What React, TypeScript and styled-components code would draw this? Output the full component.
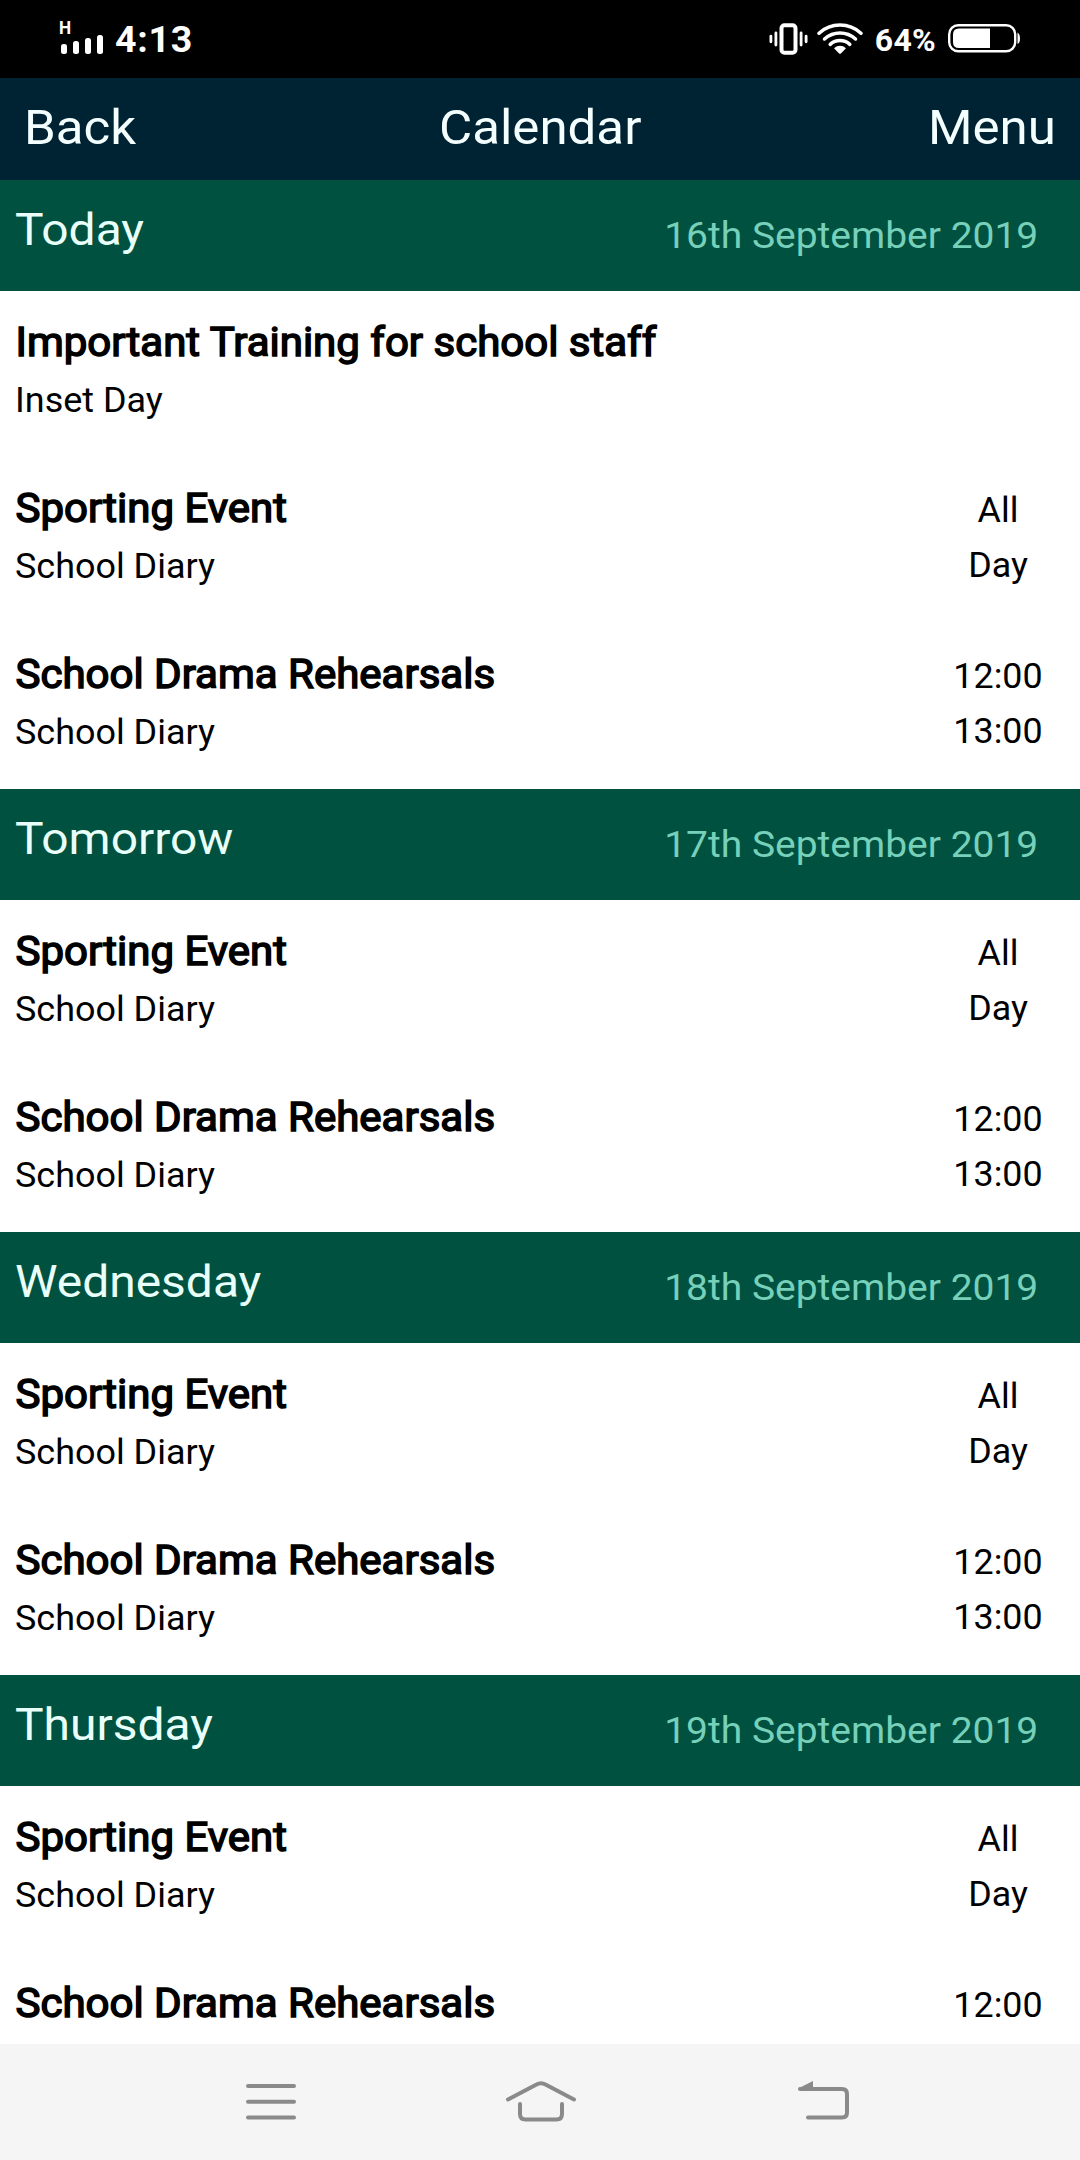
import React from "react";
import styled, { createGlobalStyle } from "styled-components";

const GlobalStyle = createGlobalStyle`
  * { box-sizing: border-box; }
  html, body { margin: 0; padding: 0; background: #fff; }
  body { font-family: Roboto, "Liberation Sans", sans-serif; overflow: hidden; }
`;

const Screen = styled.div`
  width: 1080px;
  height: 2160px;
  display: flex;
  flex-direction: column;
  overflow: hidden;
  background: #fff;
`;

const StatusBar = styled.div`
  flex: none;
  height: 77.5px;
  padding: 0 59px 0 59px;
  display: flex;
  justify-content: space-between;
  align-items: center;
  background: #000;
  color: #fff;
`;

const StatusGroup = styled.div`
  display: flex;
  align-items: center;
  height: 78px;
`;

const Signal = styled.div`
  width: 46px;
  height: 36px;
  display: flex;
  flex-direction: column;
  justify-content: space-between;
  margin-bottom: 4px;
`;

const Network = styled.span`
  font-size: 19px;
  font-weight: 700;
  line-height: 18px;
  height: 16px;
  transform: scaleX(0.9);
  transform-origin: left;
`;

const Clock = styled.span`
  margin-left: 10px;
  font-size: 37.5px;
  font-weight: 700;
  line-height: 44px;
  letter-spacing: 0.7px;
  padding-top: 1px;
`;

const Percent = styled.span`
  margin: 2px 12px 0 12px;
  font-size: 32px;
  font-weight: 700;
  line-height: 40px;
  letter-spacing: 0.3px;
`;

const AppBar = styled.header`
  flex: none;
  height: 102.5px;
  padding: 0 24px;
  display: grid;
  grid-template-columns: 1fr auto 1fr;
  align-items: center;
  background: #002333;
  color: #f4ffff;
  font-size: 48.5px;
  line-height: 98px;
  padding-bottom: 2px;
`;

const NavLink = styled.span<{ $align: "left" | "center" | "right" }>`
  text-align: ${(p) => p.$align};
  transform: scaleX(1.052);
  transform-origin: ${(p) => p.$align};
`;

const Agenda = styled.main`
  flex: 1;
  min-height: 0;
  overflow: hidden;
`;

const DayHeader = styled.div`
  height: 110.9px;
  padding: 22px 42px 0 15px;
  display: flex;
  justify-content: space-between;
  background: #00513f;
`;

const DayName = styled.span`
  font-size: 45px;
  line-height: 55px;
  color: #e8fffa;
  transform: scaleX(1.065);
  transform-origin: left;
`;

const DayDate = styled.span`
  font-size: 36.5px;
  line-height: 67px;
  color: #77d0b9;
  transform: scaleX(1.068);
  transform-origin: right;
`;

const Event = styled.div`
  height: 166.1px;
  padding: 24px 26.5px 0 15px;
  display: flex;
  justify-content: space-between;
  color: #000;
`;

const EventTitle = styled.div`
  padding-left: 0.5px;
  font-size: 40px;
  line-height: 56px;
  -webkit-text-stroke: 1.5px #000;
  transform: scaleX(1.05);
  transform-origin: left;
`;

const Source = styled.div`
  margin-top: 2px;
  font-size: 34.3px;
  line-height: 55px;
  transform: scaleX(1.048);
  transform-origin: left;
`;

const Times = styled.div`
  width: 112px;
  padding-top: 2px;
  font-size: 34.3px;
  line-height: 55px;
  text-align: center;
  transform: scaleX(1.045);
`;

const SystemNav = styled.footer`
  flex: none;
  height: 116px;
  padding: 0 226px 0 242px;
  display: flex;
  justify-content: space-between;
  align-items: center;
  background: #f5f5f5;
  color: #8a8a8a;
`;

const HomeButton = styled.div`
  display: flex;
  margin-right: 14px;
`;

type CalendarEvent = { title: string; source?: string; times?: string[] };
type Day = { name: string; date: string; events: CalendarEvent[] };

const sporting: CalendarEvent = { title: "Sporting Event", source: "School Diary", times: ["All", "Day"] };
const drama: CalendarEvent = { title: "School Drama Rehearsals", source: "School Diary", times: ["12:00", "13:00"] };

const days: Day[] = [
  {
    name: "Today",
    date: "16th September 2019",
    events: [{ title: "Important Training for school staff", source: "Inset Day" }, sporting, drama],
  },
  { name: "Tomorrow", date: "17th September 2019", events: [sporting, drama] },
  { name: "Wednesday", date: "18th September 2019", events: [sporting, drama] },
  {
    name: "Thursday",
    date: "19th September 2019",
    events: [sporting, { title: "School Drama Rehearsals", times: ["12:00"] }],
  },
];

const SignalBars = () => (
  <svg width="46" height="20" viewBox="0 0 46 20" fill="#fff">
    <rect x="2" y="9" width="6" height="10" rx="2.5" />
    <rect x="14" y="6" width="6" height="13" rx="2.5" />
    <rect x="26" y="3" width="6" height="16" rx="2.5" />
    <rect x="38" y="0" width="6" height="19" rx="2.5" />
  </svg>
);

const Vibrate = styled.svg`
  margin-right: 8px;
`;

const VibrateIcon = () => (
  <Vibrate width="40" height="32" viewBox="0 0 40 32" fill="none" stroke="#fff" strokeLinecap="round">
    <rect x="12.5" y="2.3" width="14" height="27.4" rx="3" strokeWidth="4" />
    <path d="M6.9 10v12M32.1 10v12" strokeWidth="2.8" />
    <path d="M1.9 13.2v5.6M37.1 13.2v5.6" strokeWidth="2.8" />
  </Vibrate>
);

const WifiIcon = () => (
  <svg width="46" height="32" viewBox="0 0 46 32" fill="none" stroke="#fff" strokeWidth="3.5" strokeLinecap="round">
    <path d="M2 10.2C14 -.7 32 -.7 44 10.2" />
    <path d="M7.5 16C16.5 8 29.5 8 38.5 16" />
    <path d="M13.2 21.3C19 16.3 27 16.3 32.8 21.3" />
    <path d="M17 25.3C20.5 22 25.5 22 29 25.3L23.9 30.5Q23 31.3 22.1 30.5Z" fill="#fff" stroke="none" />
  </svg>
);

const BatteryIcon = () => (
  <svg width="73" height="29" viewBox="0 0 73 29">
    <rect x="1.2" y="1.2" width="66" height="26" rx="9" fill="none" stroke="#fff" strokeWidth="2.4" />
    <path d="M42 4.5V24H11Q5 24 5 18V10.5Q5 4.5 11 4.5Z" fill="#fff" />
    <path d="M69.5 8.5Q72 10 72 14.5T69.5 20Z" fill="#fff" />
  </svg>
);

const RecentsIcon = () => (
  <svg width="58" height="44" viewBox="0 0 58 44" stroke="currentColor" strokeWidth="4" strokeLinecap="round">
    <path d="M6 6H52M6 21.7H52M6 37.5H52" />
  </svg>
);

const HomeIcon = () => (
  <svg width="72" height="44" viewBox="0 0 72 44" fill="none" stroke="currentColor" strokeWidth="4" strokeLinecap="round">
    <path d="M3 19.5L31.5 4.5Q36 2 40.5 4.5L69 19.5" />
    <path d="M15 24V34Q15 39.5 20.5 39.5H51.5Q57 39.5 57 34V24" />
  </svg>
);

const BackIcon = () => (
  <svg width="58" height="44" viewBox="0 0 58 44" fill="none" stroke="currentColor" strokeWidth="4" strokeLinecap="round">
    <path d="M4 9H46Q51 9 51 14V32.5Q51 37.5 46 37.5H12" />
    <path d="M2 8.5L17 1V9Z" fill="currentColor" stroke="none" />
  </svg>
);

export default function App() {
  return (
    <Screen>
      <GlobalStyle />
      <StatusBar>
        <StatusGroup>
          <Signal>
            <Network>H</Network>
            <SignalBars />
          </Signal>
          <Clock>4:13</Clock>
        </StatusGroup>
        <StatusGroup>
          <VibrateIcon />
          <WifiIcon />
          <Percent>64%</Percent>
          <BatteryIcon />
        </StatusGroup>
      </StatusBar>
      <AppBar>
        <NavLink $align="left">Back</NavLink>
        <NavLink $align="center">Calendar</NavLink>
        <NavLink $align="right">Menu</NavLink>
      </AppBar>
      <Agenda>
        {days.map((day) => (
          <section key={day.name}>
            <DayHeader>
              <DayName>{day.name}</DayName>
              <DayDate>{day.date}</DayDate>
            </DayHeader>
            {day.events.map((event) => (
              <Event key={event.title}>
                <div>
                  <EventTitle>{event.title}</EventTitle>
                  {event.source && <Source>{event.source}</Source>}
                </div>
                {event.times && (
                  <Times>
                    {event.times.map((t) => (
                      <div key={t}>{t}</div>
                    ))}
                  </Times>
                )}
              </Event>
            ))}
          </section>
        ))}
      </Agenda>
      <SystemNav>
        <RecentsIcon />
        <HomeButton>
          <HomeIcon />
        </HomeButton>
        <BackIcon />
      </SystemNav>
    </Screen>
  );
}
